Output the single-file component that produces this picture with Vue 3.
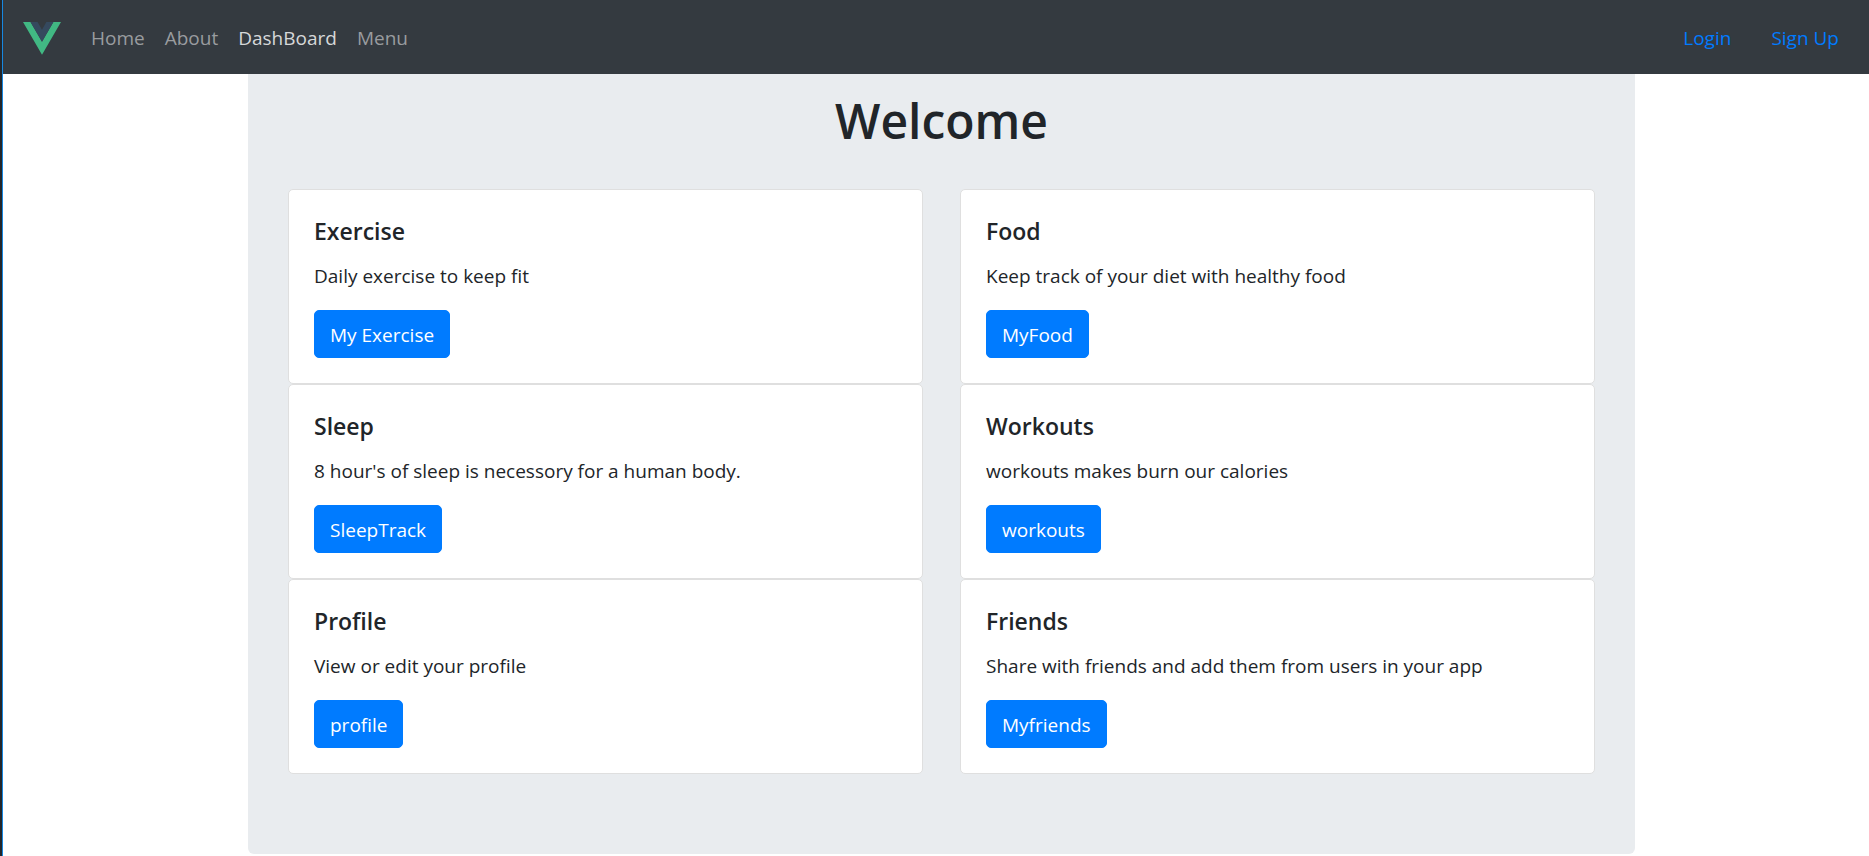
<script setup>
const links = [
  { label: 'Home', active: false },
  { label: 'About', active: false },
  { label: 'DashBoard', active: true },
  { label: 'Menu', active: false },
]

const cards = [
  { title: 'Exercise', text: 'Daily exercise to keep fit', action: 'My Exercise' },
  { title: 'Food', text: 'Keep track of your diet with healthy food', action: 'MyFood' },
  { title: 'Sleep', text: "8 hour's of sleep is necessory for a human body.", action: 'SleepTrack' },
  { title: 'Workouts', text: 'workouts makes burn our calories', action: 'workouts' },
  { title: 'Profile', text: 'View or edit your profile', action: 'profile' },
  { title: 'Friends', text: 'Share with friends and add them from users in your app', action: 'Myfriends' },
]
</script>

<template>
  <div class="page">
    <header class="navbar">
      <a class="brand" href="#" aria-label="Vue">
        <svg viewBox="0 0 256 221" width="38" height="33" aria-hidden="true">
          <path fill="#41b883" d="M0 0l128 220.8L256 0h-51.2L128 132.48 50.56 0z" />
          <path fill="#35495e" d="M50.56 0L128 133.12 204.8 0h-47.36L128 51.2 97.92 0z" />
        </svg>
      </a>
      <nav class="links" aria-label="Main">
        <a
          v-for="link in links"
          :key="link.label"
          class="link"
          :class="{ active: link.active }"
          href="#"
        >{{ link.label }}</a>
      </nav>
      <nav class="account" aria-label="Account">
        <a class="link" href="#">Login</a>
        <a class="link" href="#">Sign Up</a>
      </nav>
    </header>

    <main class="content">
      <section class="panel">
        <h1>Welcome</h1>
        <div class="cards">
          <article v-for="card in cards" :key="card.title" class="card">
            <h2>{{ card.title }}</h2>
            <p>{{ card.text }}</p>
            <button type="button">{{ card.action }}</button>
          </article>
        </div>
      </section>
    </main>
  </div>
</template>

<style>
body {
  margin: 0;
  background: #fff;
}
</style>

<style scoped>
.page {
  box-sizing: border-box;
  min-height: 100vh;
  border-left: 1px solid #1787e0;
  box-shadow: -2px 0 0 #22262b;
  margin-left: 2px;
  color: #212529;
  font-family: "Segoe UI", "Open Sans", "Noto Sans", sans-serif;
  font-size: 19px;
  line-height: 32px;
}

.navbar {
  display: flex;
  align-items: center;
  height: 74px;
  padding: 0 20px;
  background: #343a40;
}

.brand {
  display: flex;
  margin-right: 20px;
  padding-top: 3px;
}

.navbar a {
  text-decoration: none;
}

.links {
  display: flex;
}

.link {
  padding: 10px 10px 8px;
  color: #999c9f;
}

.link.active {
  color: #d6d8d9;
}

.account {
  display: flex;
  gap: 20px;
  margin-left: auto;
}

.account .link {
  color: #007bff;
}

.content {
  display: grid;
  grid-template-columns: 245fr 1387fr 234fr;
}

.panel {
  grid-column: 2;
  padding: 17px 40px 80px;
  background: #e9ecef;
  border-radius: 0 0 6px 6px;
}

h1 {
  margin: 0 0 38px;
  font-size: 48px;
  font-weight: 600;
  line-height: 60px;
  text-align: center;
}

.cards {
  display: grid;
  grid-template-columns: 1fr 1fr;
  column-gap: 37px;
}

.card {
  padding: 25px;
  background: #fff;
  border: 1px solid #dfdfdf;
  border-radius: 5px;
}

h2 {
  margin: 0 0 13px;
  font-size: 23px;
  font-weight: 600;
  line-height: 32px;
}

p {
  margin: 0 0 18px;
}

button {
  display: block;
  height: 48px;
  padding: 2px 15px 0;
  color: #fff;
  background: #007bff;
  border: 1px solid #007bff;
  border-radius: 5px;
  font: inherit;
  cursor: pointer;
}
</style>
